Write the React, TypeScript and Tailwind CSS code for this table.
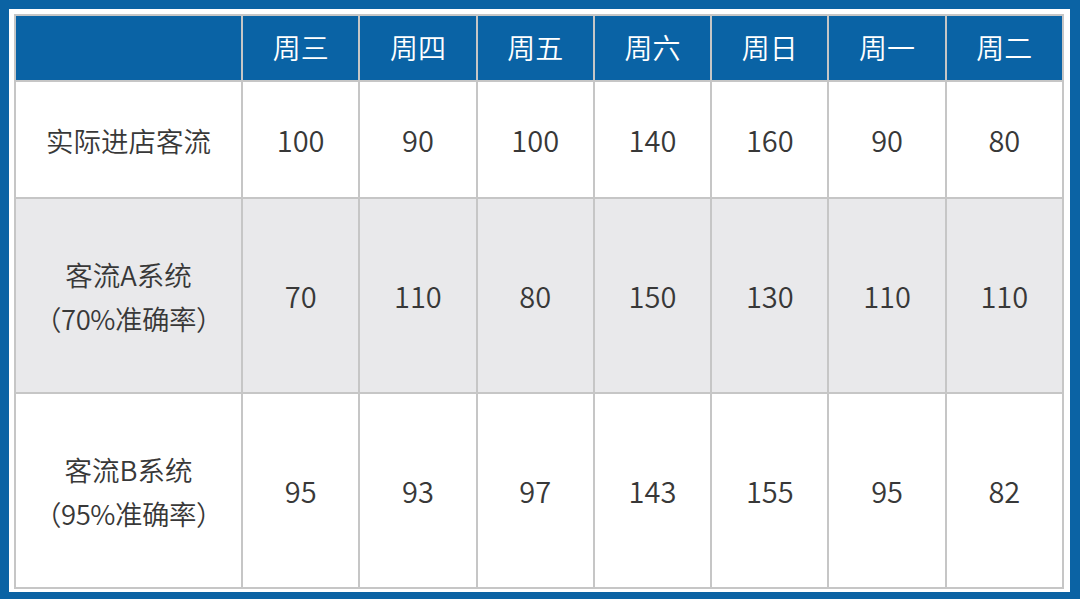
const DAYS = ['周三', '周四', '周五', '周六', '周日', '周一', '周二'];

const ROWS: { label: string[]; values: number[]; shaded: boolean }[] = [
  { label: ['实际进店客流'], values: [100, 90, 100, 140, 160, 90, 80], shaded: false },
  { label: ['客流A系统', '（70%准确率）'], values: [70, 110, 80, 150, 130, 110, 110], shaded: true },
  { label: ['客流B系统', '（95%准确率）'], values: [95, 93, 97, 143, 155, 95, 82], shaded: false },
];

export default function App() {
  return (
    <div
      className="w-[1080px] h-[599px] bg-[#0b63a4] pt-[9px] pl-[9px] pr-[10px] pb-[7px]"
      style={{ fontFamily: '"Noto Sans CJK SC", "Noto Sans", sans-serif' }}
    >
      <div className="h-full w-full bg-white pt-[5px] pl-[5px] pr-[6px] pb-[3px]">
        <div className="grid h-full w-full grid-cols-[225px_repeat(7,1fr)] grid-rows-[64px_115px_193px_1fr] gap-[2px] bg-[#c6c6c6] p-[2px]">
          <div className="bg-[#0a63a5]" />
          {DAYS.map((d) => (
            <div key={d} className="flex items-center justify-center bg-[#0a63a5] pb-[3px] text-[28px] font-[350] text-white">
              {d}
            </div>
          ))}

          {ROWS.map((row, i) => (
            <>
              <div
                key={'l' + i}
                className={`flex flex-col items-center justify-center text-[27.5px] font-[350] leading-[44px] text-[#383838] ${row.shaded ? 'bg-[#e9e9eb]' : 'bg-white'}`}
              >
                {row.label.map((l) => (
                  <span key={l} className={l.startsWith('（') ? 'tracking-[-0.5px]' : ''}>{l}</span>
                ))}
              </div>
              {row.values.map((v, j) => (
                <div
                  key={i + '-' + j}
                  className={`flex items-center justify-center text-[29px] font-[350] text-[#383838] ${row.shaded ? 'bg-[#e9e9eb]' : 'bg-white'}`}
                >
                  {v}
                </div>
              ))}
            </>
          ))}
        </div>
      </div>
    </div>
  );
}
